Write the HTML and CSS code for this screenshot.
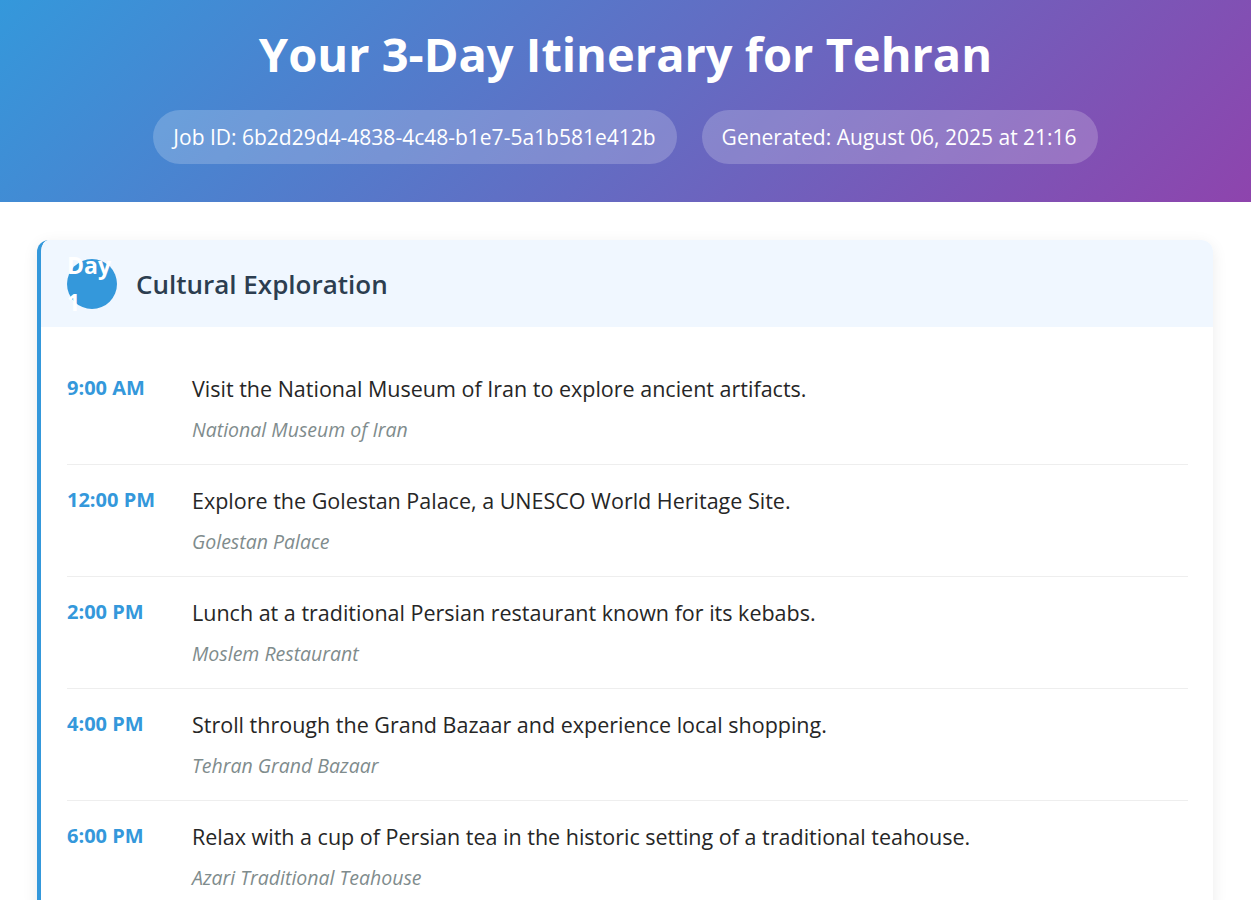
FILE: index.html
```html
<!DOCTYPE html>
<html lang="en">
<head>
<meta charset="utf-8">
<title>Your 3-Day Itinerary for Tehran</title>
<link rel="stylesheet" href="styles.css">
</head>
<body>
<header class="hero">
  <h1 class="hero-title">Your 3-Day Itinerary for Tehran</h1>
  <div class="meta">
    <span class="pill">Job ID: 6b2d29d4-4838-4c48-b1e7-5a1b581e412b</span>
    <span class="pill">Generated: August 06, 2025 at 21:16</span>
  </div>
</header>
<main class="content">
  <section class="day-card">
    <div class="day-head">
      <div class="day-badge"><span class="day-badge-text">Day 1</span></div>
      <h2 class="day-title">Cultural Exploration</h2>
    </div>
    <div class="day-body">
      <div class="row">
        <div class="time">9:00 AM</div>
        <div class="detail">
          <div class="activity">Visit the National Museum of Iran to explore ancient artifacts.</div>
          <div class="place">National Museum of Iran</div>
        </div>
      </div>
      <div class="row">
        <div class="time">12:00 PM</div>
        <div class="detail">
          <div class="activity">Explore the Golestan Palace, a UNESCO World Heritage Site.</div>
          <div class="place">Golestan Palace</div>
        </div>
      </div>
      <div class="row">
        <div class="time">2:00 PM</div>
        <div class="detail">
          <div class="activity">Lunch at a traditional Persian restaurant known for its kebabs.</div>
          <div class="place">Moslem Restaurant</div>
        </div>
      </div>
      <div class="row">
        <div class="time">4:00 PM</div>
        <div class="detail">
          <div class="activity">Stroll through the Grand Bazaar and experience local shopping.</div>
          <div class="place">Tehran Grand Bazaar</div>
        </div>
      </div>
      <div class="row">
        <div class="time">6:00 PM</div>
        <div class="detail">
          <div class="activity">Relax with a cup of Persian tea in the historic setting of a traditional teahouse.</div>
          <div class="place">Azari Traditional Teahouse</div>
        </div>
      </div>
    </div>
  </section>
</main>
</body>
</html>
```

FILE: styles.css
```css
* { box-sizing: border-box; }
html, body { margin: 0; padding: 0; }
body {
  font-family: "Open Sans", "Noto Sans", sans-serif;
  background: #ffffff;
  color: #333333;
}
.hero {
  background: linear-gradient(135deg, #3498db 0%, #8e44ad 100%);
  color: #ffffff;
  text-align: center;
  height: 202px;
  padding-top: 22px;
}
.hero-title {
  margin: 0;
  font-size: 47px;
  line-height: 64px;
  font-weight: 700;
}
.meta {
  margin-top: 24px;
  display: flex;
  justify-content: center;
  gap: 25px;
}
.pill {
  background: rgba(255, 255, 255, 0.2);
  border-radius: 27px;
  height: 54px;
  padding: 0 21px 0 20px;
  display: flex;
  align-items: center;
  font-size: 21px;
}
.content {
  padding: 38px 38px 0 37px;
}
.day-card {
  background: #ffffff;
  border-left: 4px solid #3498db;
  border-radius: 12px;
  box-shadow: 0 4px 16px rgba(0, 0, 0, 0.08);
  overflow: hidden;
}
.day-head {
  background: #f0f7ff;
  height: 87px;
  padding: 0 25px 0 26px;
  display: flex;
  align-items: center;
  gap: 19px;
}
.day-badge {
  width: 50px;
  height: 50px;
  flex: none;
  border-radius: 50%;
  background: #3498db;
  color: #ffffff;
  display: flex;
  align-items: center;
}
.day-badge-text {
  width: 50px;
  font-weight: 700;
  font-size: 23px;
  line-height: 37px;
  text-align: left;
}
.day-title {
  margin: 0;
  font-size: 26px;
  font-weight: 600;
  color: #2c3e50;
}
.day-body {
  padding: 26px 25px 0 26px;
}
.row {
  display: flex;
  padding: 21px 0;
  border-bottom: 1px solid #eeeeee;
}
.time {
  width: 125px;
  flex: none;
  color: #3498db;
  font-weight: 700;
  font-size: 20px;
  line-height: 28px;
}
.activity {
  font-size: 21.5px;
  line-height: 30px;
  font-weight: 500;
  color: #262626;
}
.place {
  margin-top: 12px;
  font-size: 19.5px;
  line-height: 27px;
  font-style: italic;
  color: #7f8c8d;
}
```
